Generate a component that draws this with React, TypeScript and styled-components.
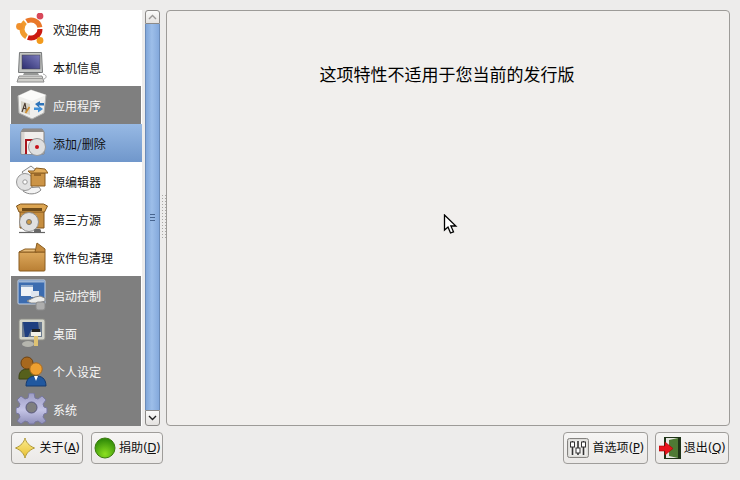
import React from "react";
import styled, { createGlobalStyle, css } from "styled-components";

/**
 * Styles
 */
const Global = createGlobalStyle`
  html, body {
    margin: 0;
    padding: 0;
    background: #edeceb;
  }
  body {
    font-family: "DejaVu Sans", "Noto Sans CJK SC", sans-serif;
    font-size: 12px;
    color: #101010;
  }
`;

const Root = styled.div`
  position: relative;
  width: 740px;
  height: 480px;
  box-sizing: border-box;
  padding: 10px 10px 16px 10px;
  display: flex;
  flex-direction: column;
  gap: 6px;
  overflow: hidden;
`;

const Main = styled.div`
  display: flex;
  height: 416px;
`;

const List = styled.div`
  width: 132px;
  height: 416px;
  overflow: hidden;
  background: #ffffff;
  flex: none;
`;

type ItemKind = "plain" | "category" | "selected";

const Item = styled.div<{ $kind: ItemKind }>`
  height: 38px;
  display: flex;
  align-items: center;
  gap: 5px;
  padding-left: 6px;
  box-sizing: border-box;
  font-family: "Noto Sans CJK SC", sans-serif;
  font-size: 12px;
  ${(p) =>
    p.$kind === "category" &&
    css`
      margin: 0 1px;
      padding-left: 5px;
      background: #7f7f7f;
      color: #f6f6f6;
    `}
  ${(p) =>
    p.$kind === "selected" &&
    css`
      background: linear-gradient(#97b9e4, #7097cb);
      color: #101010;
    `}
`;

const ItemIcon = styled.svg`
  width: 32px;
  height: 32px;
  flex: none;
`;

const ScrollBar = styled.div`
  width: 15px;
  margin-left: 3px;
  display: flex;
  flex-direction: column;
  flex: none;
`;

const ScrollButton = styled.div<{ $up?: boolean }>`
  height: ${(p) => (p.$up ? 14 : 16)}px;
  box-sizing: border-box;
  border: 1px solid #8c8a88;
  border-radius: ${(p) => (p.$up ? "3px 3px 0 0" : "0 0 3px 3px")};
  background: linear-gradient(#fbfbfa, #e4e2e0);
  display: flex;
  align-items: center;
  justify-content: center;
  flex: none;
`;

const Thumb = styled.div`
  flex: 1;
  box-sizing: border-box;
  border-left: 1px solid #6b8bb8;
  border-right: 1px solid #6b8bb8;
  background: linear-gradient(90deg, #80a6d9, #9dbee9 45%, #84a9dc);
  display: flex;
  flex-direction: column;
  align-items: center;
  justify-content: center;
  gap: 2px;
`;

const Grip = styled.span`
  width: 5px;
  height: 1px;
  background: #47648f;
`;

const Handle = styled.div`
  width: 6px;
  flex: none;
  display: flex;
  align-items: center;
  justify-content: center;
`;

const HandleDots = styled.div`
  width: 5px;
  height: 46px;
  margin-top: -3px;
  background-image: radial-gradient(#a9a7a4 0.7px, transparent 0.8px);
  background-size: 3px 3px;
`;

const Panel = styled.div`
  flex: 1;
  box-sizing: border-box;
  border: 1px solid #9d9b98;
  border-radius: 4px;
  background: #f1efed;
  display: flex;
  justify-content: center;
  padding: 51px 2px 0 0;
  font-family: "Noto Sans CJK SC", sans-serif;
  font-size: 17px;
  line-height: 24px;
  color: #000;
`;

const Footer = styled.div`
  display: flex;
  align-items: center;
  justify-content: space-between;
  padding: 0 1px;
`;

const ButtonGroup = styled.div<{ $gap: number }>`
  display: flex;
  gap: ${(p) => p.$gap}px;
`;

const Button = styled.button<{ $width: number }>`
  width: ${(p) => p.$width}px;
  height: 32px;
  box-sizing: border-box;
  border: 1px solid #9f9d9a;
  border-radius: 4px;
  background: linear-gradient(#f6f5f4, #ebe9e7);
  display: flex;
  align-items: center;
  justify-content: center;
  gap: 3px;
  padding: 0;
  font-family: "DejaVu Sans", "Noto Sans CJK SC", sans-serif;
  font-size: 12px;
  color: #101010;
`;

const ButtonIcon = styled.svg`
  width: 22px;
  height: 22px;
  flex: none;
`;

const Label = styled.span`
  white-space: nowrap;
  letter-spacing: -0.5px;
  line-height: 16px;
  margin-top: -1px;
`;

const Cjk = styled.span`
  font-family: "Noto Sans CJK SC", sans-serif;
  letter-spacing: 0;
`;

const Cursor = styled.svg`
  position: absolute;
  left: 443px;
  top: 214px;
  width: 15px;
  height: 21px;
`;

/**
 * Icons
 */
const UbuntuIcon = () => (
  <ItemIcon viewBox="0 0 32 32">
    <g fill="none" strokeWidth="5">
      <path d="M10.5 8.2A9 9 0 0 1 23.9 14.4" stroke="#e9782a" />
      <path d="M24 16A9 9 0 0 1 11.9 24.5" stroke="#cb1a10" />
      <path d="M10.5 23.8A9 9 0 0 1 9.2 9.1" stroke="#f19a2e" />
    </g>
    <circle cx="3.5" cy="13.5" r="3.4" fill="#f0902c" />
    <circle cx="24" cy="3" r="3.4" fill="#d8485a" />
    <circle cx="24" cy="27.5" r="3.4" fill="#f29a1c" />
  </ItemIcon>
);

const ComputerIcon = () => (
  <ItemIcon viewBox="0 0 32 32">
    <defs>
      <linearGradient id="screen" x1="0" y1="1" x2="1" y2="0">
        <stop offset="0" stopColor="#2c2d70" />
        <stop offset="1" stopColor="#7c7cbc" />
      </linearGradient>
    </defs>
    <path d="M3.5 1.5h22l1 20h-24z" fill="#c4c6c4" stroke="#77797a" />
    <rect x="6" y="4" width="18" height="14" fill="url(#screen)" stroke="#444" strokeWidth="0.5" />
    <path d="M8 22h14l1 2H7z" fill="#979997" />
    <path d="M3 25h23l2 6H1z" fill="#cfcfcb" stroke="#8c8c8c" />
    <path d="M3 27.5h24" stroke="#9a9a98" />
    <path d="M27 23c4 1 4 4 1 5" fill="none" stroke="#a2a2a2" />
  </ItemIcon>
);

const AppsIcon = () => (
  <ItemIcon viewBox="0 0 32 32">
    <path d="M15 1l15 5-2 18-12 6-13-6L2 7z" fill="#efefed" stroke="#b0b0ae" />
    <path d="M2 7l14 5 14-6-15-5z" fill="#fbfbfa" />
    <path d="M5 12l9 3v11l-9-3z" fill="#d5d2c6" />
    <path d="M6 23l3-9 1.5 9M7 19.5h3" fill="none" stroke="#4a3a30" strokeWidth="1.1" />
    <path d="M9.5 24l4-6" stroke="#d08a26" strokeWidth="1.6" />
    <path d="M19 15l5-3v2h4v2.5h-5v2z" fill="#2e73b8" />
    <path d="M27 20l-5 3.5V21h-4v-2.5h5V17z" fill="#3f8fd8" />
  </ItemIcon>
);

const AddRemoveIcon = () => (
  <ItemIcon viewBox="0 0 32 32">
    <path d="M5 5l2-3h19l2 3v22H5z" fill="#f1eeec" stroke="#86817d" />
    <path d="M7 2h19l2 3H5z" fill="#8f8b88" />
    <rect x="5.5" y="5" width="3" height="22" fill="#d8d4d0" />
    <rect x="9" y="12" width="10" height="15" fill="#a8151c" />
    <rect x="11" y="14" width="6" height="13" fill="#f6f2f0" />
    <circle cx="21" cy="20" r="8.5" fill="#dfdfdf" stroke="#9a9a9a" />
    <circle cx="21" cy="20" r="2" fill="#c8101a" />
  </ItemIcon>
);

const SourceEditIcon = () => (
  <ItemIcon viewBox="0 0 32 32">
    <path d="M6 7l9-6 6 5-10 7z" fill="#f6f6f6" stroke="#888" />
    <path d="M7 26c5 4 13 4 18-1l-2-3-14 1z" fill="#f3f3f3" stroke="#8a8a8a" />
    <circle cx="9" cy="17" r="8.5" fill="#e2e2e2" stroke="#979797" />
    <circle cx="9" cy="17" r="2.2" fill="#fff" stroke="#999" />
    <path d="M15 8h14v13H15z" fill="#cc9446" stroke="#8a5d20" />
    <path d="M12 6h6l2-3 9 1 3 4H14z" fill="#e2ad5c" stroke="#8a5d20" />
    <path d="M18 8v3h7V8z" fill="#99682a" />
  </ItemIcon>
);

const ThirdPartyIcon = () => (
  <ItemIcon viewBox="0 0 32 32">
    <path d="M4 7h24v18H4z" fill="#c68e40" stroke="#80551c" />
    <path d="M0.5 3l4-2h23l4 2-3 6H3z" fill="#dca552" stroke="#80551c" />
    <path d="M6 5h20v3H6z" fill="#6e4a18" />
    <circle cx="13" cy="19" r="9.5" fill="#e0e0e0" stroke="#8f8f8f" />
    <circle cx="13" cy="19" r="2.5" fill="#cc9a48" stroke="#777" />
    <path d="M3 29.5h26" stroke="#666" strokeWidth="1.2" />
    <rect x="18" y="26" width="7" height="4" rx="1.5" fill="#666" />
  </ItemIcon>
);

const BoxIcon = () => (
  <ItemIcon viewBox="0 0 32 32">
    <defs>
      <linearGradient id="carton" x1="0" y1="0" x2="0" y2="1">
        <stop offset="0" stopColor="#dca85c" />
        <stop offset="1" stopColor="#b97f34" />
      </linearGradient>
    </defs>
    <path d="M3 11h26v18a1 1 0 0 1-1 1H4a1 1 0 0 1-1-1z" fill="url(#carton)" stroke="#8a5d20" />
    <path d="M3 11l6-3h10l2 3z" fill="#e6ba76" stroke="#8a5d20" />
    <path d="M19 11l2-9 8 6v3z" fill="#c58c40" stroke="#8a5d20" />
  </ItemIcon>
);

const StartupIcon = () => (
  <ItemIcon viewBox="0 0 32 32">
    <rect x="2" y="1" width="27" height="24" rx="1" fill="#3c6cb0" stroke="#c4d4ea" />
    <rect x="2.5" y="1.5" width="26" height="2" fill="#9db5d6" />
    <rect x="5" y="6" width="12" height="11" fill="#eef1f6" />
    <rect x="5" y="6" width="12" height="2" fill="#8fa9cc" />
    <rect x="15" y="12" width="8" height="6" fill="#dfe5ee" />
    <path d="M11 22l8-4 5-1 5 2v3l-6 2h-8z" fill="#ececea" stroke="#888" />
    <rect x="20" y="23" width="9" height="8" rx="2" fill="#adadad" stroke="#8a8a8a" />
  </ItemIcon>
);

const DesktopIcon = () => (
  <ItemIcon viewBox="0 0 32 32">
    <rect x="3" y="2" width="26" height="21" rx="2" fill="#d3d4ca" stroke="#8d8d86" />
    <rect x="6" y="5" width="20" height="15" fill="#6b7a8e" />
    <path d="M7 5h15l1 8h-8l-3 7H9z" fill="#1f3f80" />
    <rect x="16" y="12" width="8" height="3" fill="#222" />
    <rect x="15" y="15" width="10" height="4" fill="#f0f0e8" />
    <path d="M18 19h4v10h-4z" fill="#dfc272" />
    <ellipse cx="12" cy="27" rx="6" ry="3" fill="#b6b6ae" />
  </ItemIcon>
);

const PersonalIcon = () => (
  <ItemIcon viewBox="0 0 32 32">
    <path d="M3 22c0-6 4-8 9-8s9 2 9 8v2H3z" fill="#56601c" stroke="#3a4210" />
    <circle cx="11" cy="8" r="6" fill="#a8681e" stroke="#6e4210" />
    <path d="M10 31c0-8 5-10 10-10s10 2 10 10z" fill="#21589f" stroke="#153a70" />
    <circle cx="20" cy="14" r="6.2" fill="#efa030" stroke="#a8681e" />
    <path d="M18 21h4l-2 5z" fill="#fff" />
  </ItemIcon>
);

const GearIcon = () => (
  <ItemIcon viewBox="0 0 32 32">
    <defs>
      <linearGradient id="gear" x1="0" y1="0" x2="0" y2="1">
        <stop offset="0" stopColor="#9c9cc4" />
        <stop offset="0.55" stopColor="#c4c4e6" />
        <stop offset="1" stopColor="#8f8fba" />
      </linearGradient>
    </defs>
    <path
      d="M13 0h5l1 5 3 1 4-3 4 4-3 4 1 3 3 1v5l-3 1-1 3 3 4-4 3-4-3-3 1-1 2h-5l-1-2-3-1-4 3-4-3 3-4-1-3-3-1v-5l3-1 1-3-3-4 4-4 4 3 3-1z"
      fill="url(#gear)"
      stroke="#77779f"
      strokeLinejoin="round"
    />
    <circle cx="15.5" cy="14.5" r="5.5" fill="#7f7f7f" stroke="#58587c" />
  </ItemIcon>
);

const StarIcon = () => (
  <ButtonIcon viewBox="0 0 22 22">
    <defs>
      <linearGradient id="gold" x1="0" y1="0" x2="0" y2="1">
        <stop offset="0" stopColor="#fbec90" />
        <stop offset="1" stopColor="#e8bf30" />
      </linearGradient>
    </defs>
    <path
      d="M11 1c1 4 3.5 7.5 9.5 10-6 2.5-8.5 6-9.5 10-1-4-3.5-7.5-9.5-10 6-2.5 8.5-6 9.5-10z"
      fill="url(#gold)"
      stroke="#b09a3c"
    />
  </ButtonIcon>
);

const GreenBallIcon = () => (
  <ButtonIcon viewBox="0 0 22 22">
    <defs>
      <radialGradient id="ball" cx="0.5" cy="0.8" r="0.75">
        <stop offset="0" stopColor="#8ce020" />
        <stop offset="1" stopColor="#2f8a08" />
      </radialGradient>
    </defs>
    <circle cx="11" cy="11" r="10" fill="url(#ball)" stroke="#3c7a10" />
  </ButtonIcon>
);

const PrefsIcon = () => (
  <ButtonIcon viewBox="0 0 22 22">
    <rect x="0.5" y="1.5" width="21" height="19" rx="2" fill="#dddcd9" stroke="#858380" />
    <rect x="2.5" y="3.5" width="17" height="15" fill="#f2f1ef" />
    <path d="M5.5 4v14M11 4v14M16.5 4v14" stroke="#333" strokeWidth="1.6" />
    <rect x="3.5" y="5" width="4" height="5" fill="#fff" stroke="#333" />
    <rect x="9" y="11" width="4" height="5" fill="#fff" stroke="#333" />
    <rect x="14.5" y="5" width="4" height="5" fill="#fff" stroke="#333" />
  </ButtonIcon>
);

const ExitIcon = () => (
  <ButtonIcon viewBox="0 0 22 22">
    <rect x="5" y="0" width="17" height="22" fill="#1f3418" />
    <path d="M7 1h12v20H7z" fill="#e8e8e4" />
    <path d="M10 3l9-2v20l-9-2z" fill="#4e7a34" />
    <path d="M0 9h6V5l8 6.5L6 18v-4H0z" fill="#e8141c" stroke="#a00" strokeWidth="0.6" />
  </ButtonIcon>
);

const Chevron = ({ up }: { up?: boolean }) => (
  <svg width="9" height="6" viewBox="0 0 9 6">
    <path
      d={up ? "M1 5l3.5-3.5L8 5" : "M1 1l3.5 3.5L8 1"}
      fill="none"
      stroke={up ? "#9a9896" : "#222"}
      strokeWidth="1.4"
    />
  </svg>
);

const items: { label: string; kind: ItemKind; icon: React.ReactNode }[] = [
  { label: "欢迎使用", kind: "plain", icon: <UbuntuIcon /> },
  { label: "本机信息", kind: "plain", icon: <ComputerIcon /> },
  { label: "应用程序", kind: "category", icon: <AppsIcon /> },
  { label: "添加/删除", kind: "selected", icon: <AddRemoveIcon /> },
  { label: "源编辑器", kind: "plain", icon: <SourceEditIcon /> },
  { label: "第三方源", kind: "plain", icon: <ThirdPartyIcon /> },
  { label: "软件包清理", kind: "plain", icon: <BoxIcon /> },
  { label: "启动控制", kind: "category", icon: <StartupIcon /> },
  { label: "桌面", kind: "category", icon: <DesktopIcon /> },
  { label: "个人设定", kind: "category", icon: <PersonalIcon /> },
  { label: "系统", kind: "category", icon: <GearIcon /> },
];

const FooterButton = ({
  width,
  icon,
  text,
  mnemonic,
}: {
  width: number;
  icon: React.ReactNode;
  text: string;
  mnemonic: string;
}) => (
  <Button $width={width}>
    {icon}
    <Label>
      <Cjk>{text}</Cjk>(<u>{mnemonic}</u>)
    </Label>
  </Button>
);

const App = () => {
  return (
    <Root>
      <Global />
      <Main>
        <List>
          {items.map((item) => (
            <Item key={item.label} $kind={item.kind}>
              {item.icon}
              <span>{item.label}</span>
            </Item>
          ))}
        </List>
        <ScrollBar>
          <ScrollButton $up>
            <Chevron up />
          </ScrollButton>
          <Thumb>
            <Grip />
            <Grip />
            <Grip />
          </Thumb>
          <ScrollButton>
            <Chevron />
          </ScrollButton>
        </ScrollBar>
        <Handle>
          <HandleDots />
        </Handle>
        <Panel>这项特性不适用于您当前的发行版</Panel>
      </Main>
      <Footer>
        <ButtonGroup $gap={8}>
          <FooterButton width={72} icon={<StarIcon />} text="关于" mnemonic="A" />
          <FooterButton width={72} icon={<GreenBallIcon />} text="捐助" mnemonic="D" />
        </ButtonGroup>
        <ButtonGroup $gap={7}>
          <FooterButton width={85} icon={<PrefsIcon />} text="首选项" mnemonic="P" />
          <FooterButton width={74} icon={<ExitIcon />} text="退出" mnemonic="Q" />
        </ButtonGroup>
      </Footer>
      <Cursor viewBox="0 0 15 21">
        <path d="M1.5 1v15l3.5-3 2.5 6 3-1.2-2.6-5.8h5z" fill="#fff" stroke="#000" strokeWidth="1.3" />
      </Cursor>
    </Root>
  );
};

export default App;
